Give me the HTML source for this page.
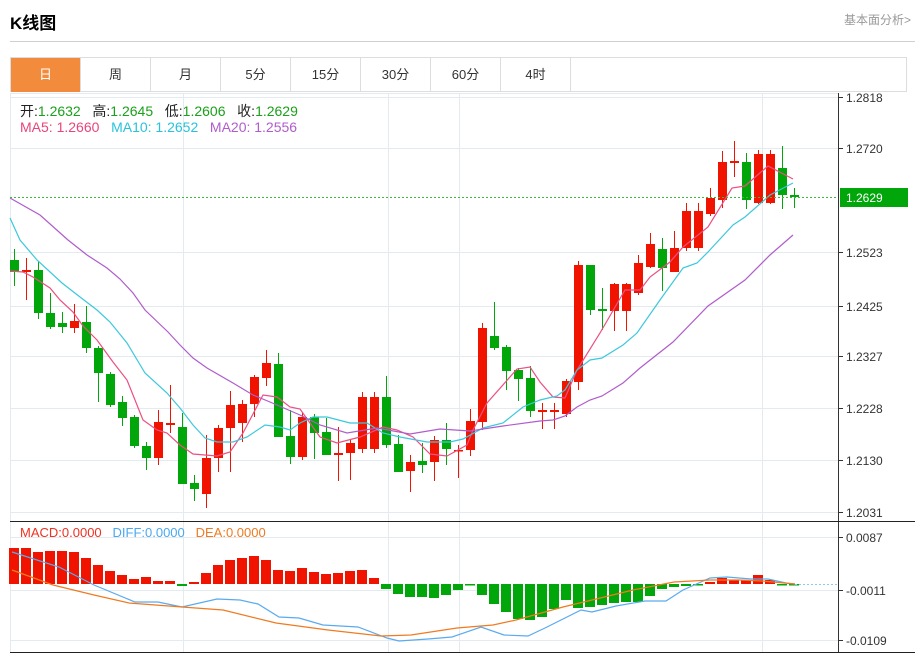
<!DOCTYPE html>
<html><head><meta charset="utf-8">
<style>
body{margin:0;background:#fff;font-family:"Liberation Sans","Noto Sans CJK SC",sans-serif;}
#w{position:relative;width:915px;height:655px;overflow:hidden;}
.t{position:absolute;left:10px;top:9px;font-size:17px;font-weight:bold;color:#000;}
.lk{position:absolute;right:4px;top:11px;font-size:12px;color:#999;}
.hl{position:absolute;left:10px;top:41px;width:905px;height:1px;background:#d0d0d0;}
.tabs{position:absolute;left:10px;top:57px;width:897px;height:35px;border:1px solid #ddd;box-sizing:border-box;}
.tab{position:absolute;top:0;height:34px;width:70px;border-right:1px solid #ddd;box-sizing:border-box;text-align:center;line-height:34px;font-size:13px;color:#333;}
.tab.on{background:#f28b3c;color:#fff;}
.info{position:absolute;left:20px;font-size:14px;white-space:nowrap;}
.g{color:#1aa01a}
</style></head><body><div id="w">
<div class="t">K线图</div>
<div class="lk">基本面分析&gt;</div>
<div class="hl"></div>
<div class="tabs">
<div class="tab on" style="left:0">日</div>
<div class="tab" style="left:70px">周</div>
<div class="tab" style="left:140px">月</div>
<div class="tab" style="left:210px">5分</div>
<div class="tab" style="left:280px">15分</div>
<div class="tab" style="left:350px">30分</div>
<div class="tab" style="left:420px">60分</div>
<div class="tab" style="left:490px">4时</div>
</div>
<svg id="s" width="915" height="655" style="position:absolute;left:0;top:0" xmlns="http://www.w3.org/2000/svg"></svg>
<div class="info" style="top:101px;color:#222">开:<span class="g">1.2632</span>&nbsp;&nbsp; 高:<span class="g">1.2645</span>&nbsp;&nbsp; 低:<span class="g">1.2606</span>&nbsp;&nbsp; 收:<span class="g">1.2629</span></div>
<div class="info" style="top:119px"><span style="color:#e8457a">MA5: 1.2660</span>&nbsp;&nbsp; <span style="color:#29c2dc">MA10: 1.2652</span>&nbsp;&nbsp; <span style="color:#b05ccc">MA20: 1.2556</span></div>
<div class="info" style="top:525px;font-size:13px"><span style="color:#f03020">MACD:0.0000</span>&nbsp;&nbsp; <span style="color:#4aa8f0">DIFF:0.0000</span>&nbsp;&nbsp; <span style="color:#f07a20">DEA:0.0000</span></div>
</div>
<script>
var S=document.getElementById('s'),h='';
function L(x1,y1,x2,y2,c,w,d){h+='<line x1="'+x1+'" y1="'+y1+'" x2="'+x2+'" y2="'+y2+'" stroke="'+c+'" stroke-width="'+(w||1)+'"'+(d?' stroke-dasharray="'+d+'"':'')+'/>';}
function R(x,y,w,hh,c){h+='<rect x="'+x+'" y="'+y+'" width="'+w+'" height="'+Math.max(hh,1.5)+'" fill="'+c+'"/>';}
function T(x,y,s,c,fs){h+='<text x="'+x+'" y="'+y+'" fill="'+(c||'#333')+'" font-size="'+(fs||12)+'" font-family="Liberation Sans,sans-serif">'+s+'</text>';}
function P(pts,c){h+='<polyline points="'+pts.map(function(p){return p.join(',')}).join(' ')+'" fill="none" stroke="'+c+'" stroke-width="1.2"/>';}
L(10,93.5,838,93.5,'#e3eaf0');
[[97,'1.2818'],[148,'1.2720'],[252,'1.2523'],[306,'1.2425'],[356,'1.2327'],[408,'1.2228'],[460,'1.2130'],[512,'1.2031']].forEach(function(a){L(10,a[0]+.5,838,a[0]+.5,'#e3eaf0');L(838,a[0]+.5,843,a[0]+.5,'#333');T(846,a[0]+5,a[1]);});
[[537,'0.0087'],[590,'-0.0011'],[640,'-0.0109']].forEach(function(a){L(10,a[0]+.5,838,a[0]+.5,'#e3eaf0');L(838,a[0]+.5,843,a[0]+.5,'#333');T(846,a[0]+5,a[1]);});
[183,388,459,762].forEach(function(x){L(x+.5,93,x+.5,652,'#e3eaf0');});
L(10.5,93,10.5,652,'#e3eaf0');
L(838.5,93,838.5,652,'#333');
L(10,521.5,915,521.5,'#222');
L(10,652.5,915,652.5,'#222');
var C=[[260,272,249,286,0],[270,272,258,300,1],[270,313,261,319,0],[313,327,293,329,0],[323,327,312,333,0],[321,328,304,333,1],[322,348,306,353,0],[348,373,346,402,0],[374,405,372,407,0],[402,418,396,426,0],[417,446,415,448,0],[446,458,442,470,0],[422,458,410,465,1],[423,425,385,433,1],[427,484,413,484,0],[483,489,475,501,0],[458,494,435,508,1],[428,458,425,472,1],[405,428,391,472,1],[404,423,400,442,1],[377,404,375,417,1],[363,378,350,386,1],[364,437,353,437,0],[436,457,410,464,0],[417,457,413,460,1],[417,433,414,459,0],[432,455,418,455,0],[453,455,427,481,1],[443,453,439,480,1],[397,449,392,453,1],[397,449,392,453,1],[397,445,376,448,0],[444,472,435,472,0],[462,471,455,492,1],[461,465,443,473,0],[440,462,436,481,1],[440,449,423,465,0],[450,451,445,478,1],[421,450,409,456,1],[328,422,323,430,1],[336,348,302,350,0],[347,371,345,390,0],[370,379,368,401,0],[378,411,366,417,0],[410,412,403,429,1],[410,412,403,429,1],[381,414,379,417,1],[265,382,261,390,1],[265,310,265,315,0],[309,311,288,330,0],[284,311,283,331,1],[284,311,283,331,1],[263,293,255,295,1],[244,267,233,268,1],[249,268,238,291,0],[248,272,231,272,1],[211,248,203,251,1],[211,248,203,251,1],[198,214,188,216,1],[162,200,151,208,1],[161,163,141,177,1],[162,200,153,209,0],[154,203,150,204,1],[154,203,150,204,1],[168,195,146,209,0],[195,197,188,208,0]];
var RED='#f01400',GRN='#00a60a';
C.forEach(function(c,i){var x=14+i*12,col=c[4]?RED:GRN;L(x+.5,c[2],x+.5,c[3],col,1);R(x-4,c[0],9,c[1]-c[0],col);});
P([[10,271],[23,272],[33,277],[50,288],[60,300],[73,312],[83,326],[97,340],[113,362],[127,380],[143,420],[157,430],[167,433],[180,445],[193,454],[217,456],[230,452],[243,433],[263,395],[277,397],[290,407],[300,409],[320,437],[337,443],[360,437],[383,427],[397,430],[413,437],[430,454],[447,456],[467,445],[473,430],[487,403],[517,369],[530,367],[540,382],[553,397],[565,398],[577,370],[600,333],[625,290],[640,290],[650,277],[670,262],[683,247],[708,227],[732,188],[745,186],[768,166],[793,179]],'#ec4f82');
P([[10,218],[20,240],[37,260],[62,283],[80,297],[97,310],[110,322],[127,343],[145,373],[167,393],[180,408],[193,425],[205,438],[217,442],[233,442],[247,437],[265,425],[280,427],[290,430],[300,423],[313,417],[327,417],[350,423],[367,423],[383,433],[400,437],[427,442],[450,442],[463,439],[483,428],[503,423],[523,407],[540,400],[557,396],[565,390],[577,370],[590,360],[602,358],[623,345],[637,333],[660,300],[683,268],[697,263],[708,252],[733,225],[745,217],[770,195],[793,183]],'#3cc8dc');
P([[10,198],[40,215],[68,240],[87,255],[107,268],[120,279],[133,293],[145,310],[168,332],[180,345],[193,358],[207,368],[233,383],[253,395],[270,402],[300,415],[320,425],[347,433],[377,428],[410,434],[440,429],[470,431],[503,426],[540,421],[553,420],[565,416],[577,407],[590,400],[602,396],[623,383],[640,368],[673,342],[708,306],[745,280],[770,255],[793,235]],'#b05ccc');
L(10,197.5,838,197.5,'#3cb83c',1,'2,2');
R(840,188,68,19,'#00a60a');T(846,202,'1.2629','#fff');
var H=[548,548,552,551,551,552,558,565,571,575,579,577,581,581,586,582,573,565,560,558,556,560,570,571,568,572,574,573,571,570,578,589,594,597,597,598,595,590,585,595,604,612,619,620,617,609,600,608,607,605,603,602,602,596,589,587,586,585,582,578,580,580,575,580,584,584];
H.forEach(function(y,i){var x=14+i*12-5;if(y<584)R(x,y,10,584-y,RED);else R(x,584,10,y-584,GRN);});
L(795,584.5,838,584.5,'#8cc8f0',1,'2,2');
P([[12,552],[59,567],[94,585],[135,602],[158,602],[182,607],[217,599],[240,600],[258,604],[279,617],[299,618],[323,625],[358,627],[387,638],[399,641],[428,639],[452,637],[481,627],[504,635],[528,636],[545,628],[581,610],[592,612],[616,606],[645,601],[666,601],[683,590],[710,578],[727,577],[751,579],[768,579],[786,583],[795,584]],'#5aaaf0');
P([[12,570],[53,585],[94,595],[129,603],[182,607],[223,610],[276,623],[328,630],[381,636],[411,635],[457,628],[493,625],[516,620],[563,607],[592,600],[633,590],[674,582],[710,580],[739,580],[762,581],[795,584]],'#f07a20');
S.innerHTML=h;
</script>
</body></html>
